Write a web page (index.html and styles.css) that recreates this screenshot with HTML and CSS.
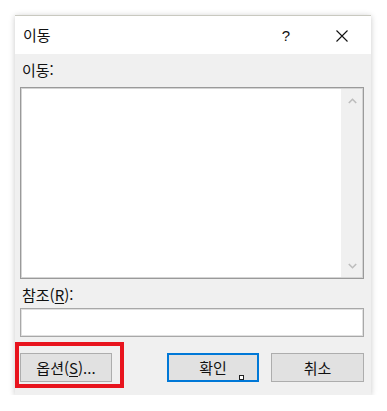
FILE: index.html
```html
<!DOCTYPE html>
<html lang="ko">
<head>
<meta charset="utf-8">
<link rel="stylesheet" href="styles.css">
</head>
<body>
<div class="dialog">
  <div class="titlebar">
    <span class="title">이동</span>
    <span class="help">?</span>
    <span class="close">
      <svg width="12" height="12" viewBox="0 0 12 12"><path d="M0.5 0.5 L11.5 11.5 M11.5 0.5 L0.5 11.5" stroke="#111" stroke-width="1.1" fill="none"/></svg>
    </span>
  </div>
  <div class="body">
    <div class="label">이동:</div>
    <div class="listbox">
      <div class="list-area"></div>
      <div class="scrollbar">
        <svg width="9" height="6" viewBox="0 0 9 6"><path d="M0.8 5 L4.5 1.3 L8.2 5" stroke="#bdbdbd" stroke-width="1.6" fill="none"/></svg>
        <svg width="9" height="6" viewBox="0 0 9 6"><path d="M0.8 1 L4.5 4.7 L8.2 1" stroke="#bdbdbd" stroke-width="1.6" fill="none"/></svg>
      </div>
    </div>
    <div class="label label-ref">참조(<u>R</u>):</div>
    <div class="textbox"></div>
    <div class="buttons">
      <button class="btn">옵션(<u>S</u>)...</button>
      <div class="spacer"></div>
      <button class="btn btn-default">확인<span class="cursor-mark"></span></button>
      <button class="btn btn-cancel">취소</button>
    </div>
  </div>
  <div class="highlight"></div>
</div>
</body>
</html>
```
FILE: styles.css
```css
html, body {
  margin: 0;
  padding: 0;
  background: #ffffff;
}
body {
  font-family: "Noto Sans CJK KR", "Noto Sans", sans-serif;
  color: #111;
}
.dialog {
  position: relative;
  margin: 15px 0 0 15px;
  width: 356px;
  height: 380px;
  background: #f0f0f0;
  box-shadow: 0 1px 6px rgba(0, 0, 0, 0.22);
  border-top: 1px solid #c9c9c0;
  box-sizing: border-box;
}
.titlebar {
  height: 38px;
  background: #ffffff;
  display: flex;
  align-items: center;
}
.title {
  font-size: 15px;
  margin-left: 8px;
  flex: 1;
  line-height: 20px;
}
.help {
  font-family: "Liberation Sans", sans-serif;
  font-size: 15px;
  width: 20px;
  margin-right: 40px;
  text-align: center;
}
.close {
  display: flex;
  width: 12px;
  height: 12px;
  margin-right: 23px;
  margin-top: 2px;
}
.body {
  padding: 6px 7px 0 5px;
  display: flex;
  flex-direction: column;
}
.label {
  font-size: 15px;
  line-height: 20px;
  height: 20px;
  margin-left: 2px;
}
.label u, .btn u {
  text-decoration: underline;
  text-underline-offset: 2px;
}
.listbox {
  margin-top: 7px;
  height: 192px;
  border: 1px solid #9a9a9a;
  box-shadow: inset 0 0 0 1px #d4d4d4;
  background: #fff;
  display: flex;
  box-sizing: border-box;
}
.list-area {
  flex: 1;
}
.scrollbar {
  width: 21px;
  margin: 1px 1px 1px 0;
  background: #f0f0f0;
  display: flex;
  flex-direction: column;
  justify-content: space-between;
  align-items: center;
  padding: 9px 0 8px 1px;
  box-sizing: border-box;
}
.label-ref {
  margin-top: 6px;
}
.textbox {
  margin-top: 3px;
  height: 29px;
  background: #fff;
  border: 1px solid #a8a8a8;
  box-shadow: inset 0 0 0 1px #e0e0e0;
  box-sizing: border-box;
}
.buttons {
  margin-top: 16px;
  display: flex;
  align-items: center;
}
.spacer {
  flex: 1;
}
.btn {
  position: relative;
  width: 92px;
  height: 29px;
  background: #e1e1e1;
  border: 1px solid #adadad;
  font-family: "Noto Sans CJK KR", "Noto Sans", sans-serif;
  font-size: 15px;
  color: #111;
  padding: 0;
  box-sizing: border-box;
  line-height: 20px;
}
.btn-default {
  border: 2px solid #0078d7;
}
.btn-cancel {
  margin-left: 12px;
  width: 93px;
}
.cursor-mark {
  position: absolute;
  left: 70px;
  top: 20px;
  width: 3px;
  height: 3px;
  border: 1px solid #222;
  background: #fff;
}
.highlight {
  position: absolute;
  left: 0;
  top: 326px;
  width: 109px;
  height: 46px;
  border: 4px solid #e8141e;
  box-sizing: border-box;
}
```
